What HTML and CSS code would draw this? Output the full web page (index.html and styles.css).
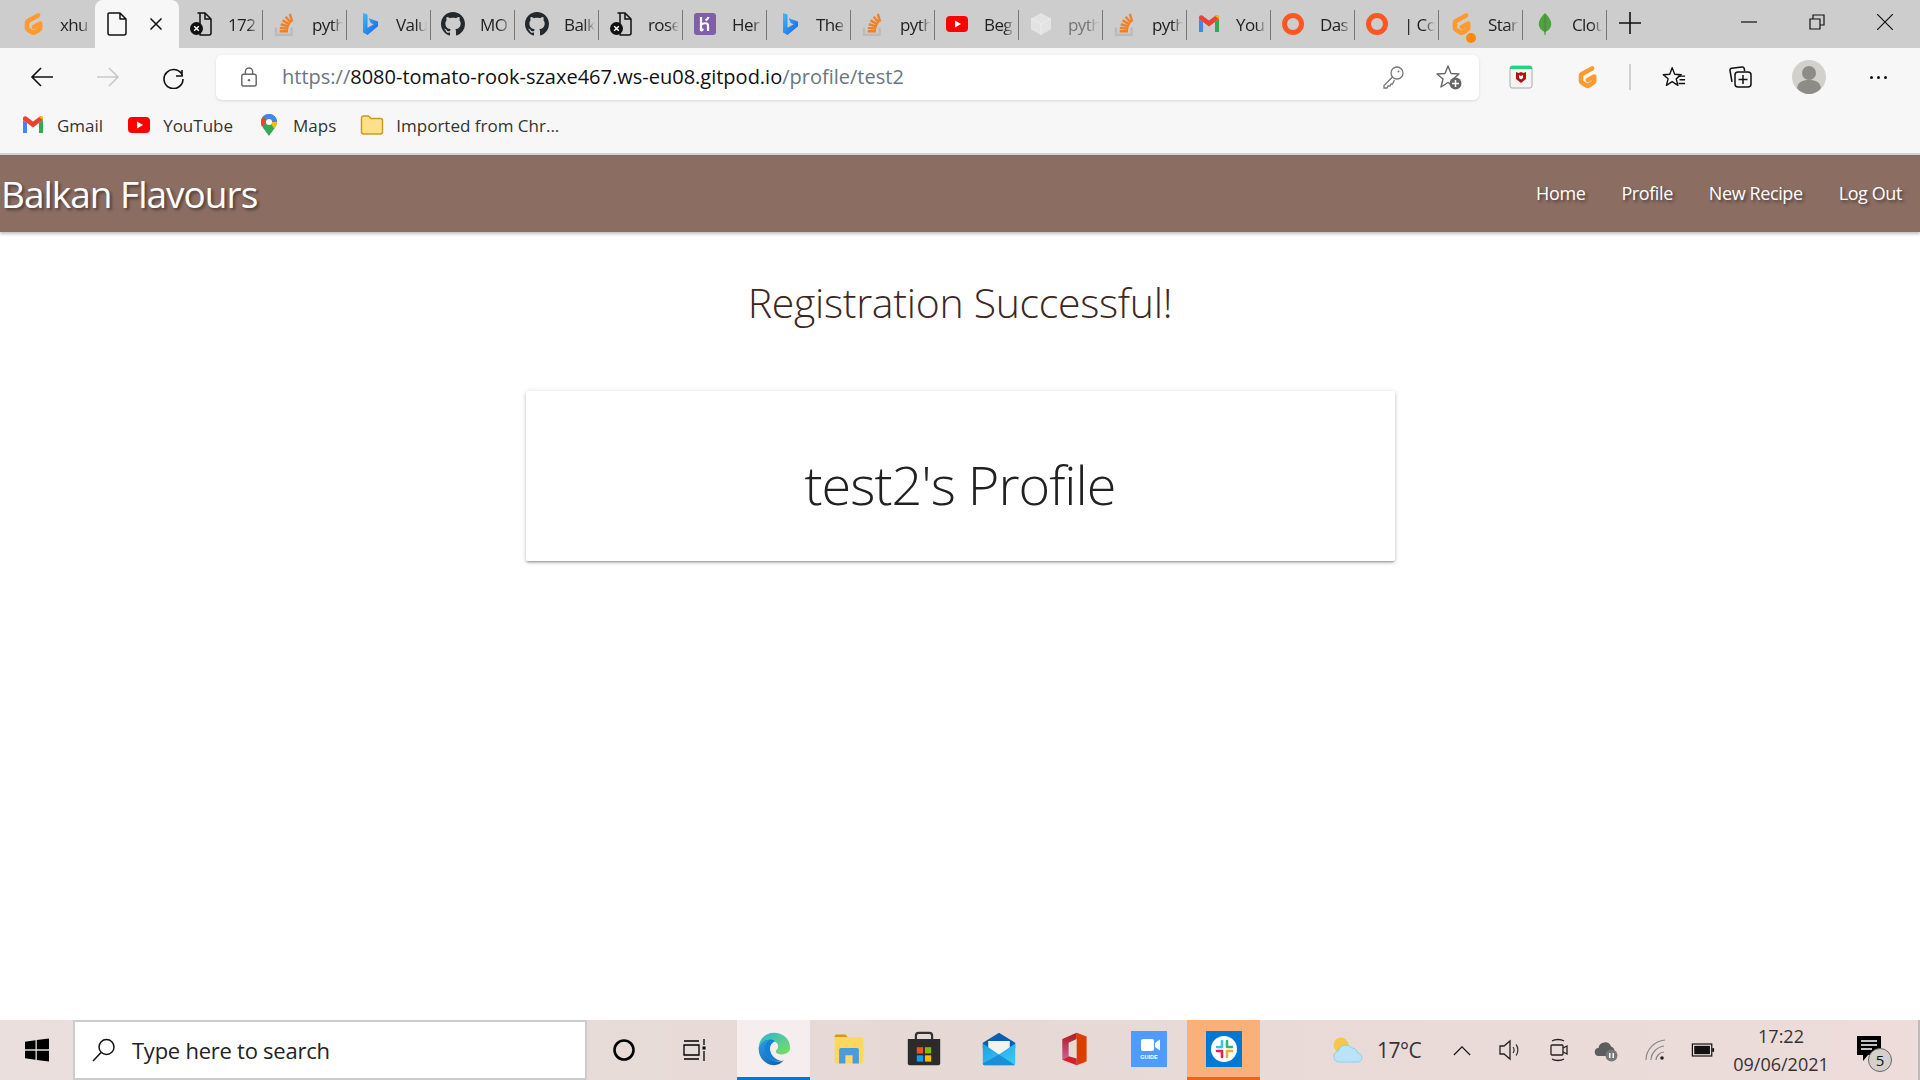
FILE: index.html
```html
<!DOCTYPE html>
<html>
<head>
<meta charset="UTF-8">
<title>Balkan Flavours</title>
<link rel="stylesheet" href="styles.css">
</head>
<body>
<svg class="defs" aria-hidden="true">
	<defs>
		<linearGradient id="bingGrad" x1="0" y1="0" x2="1" y2="1"><stop offset="0" stop-color="#37bdff"/><stop offset="1" stop-color="#1b5fe0"/></linearGradient>
		<linearGradient id="edgeGrad" x1="0" y1="0" x2="1" y2="1"><stop offset="0" stop-color="#2f9fe6"/><stop offset="1" stop-color="#0c59a4"/></linearGradient>
		<linearGradient id="edgeTop" x1="0" y1="0" x2="1" y2="1"><stop offset="0" stop-color="#2ab5d6"/><stop offset="1" stop-color="#7ee05a"/></linearGradient>
		<linearGradient id="officeGrad" x1="0" y1="0" x2="0" y2="1"><stop offset="0" stop-color="#b01818"/><stop offset="1" stop-color="#c9609c"/></linearGradient>
		<linearGradient id="mailGrad" x1="0" y1="0" x2="1" y2="1"><stop offset="0" stop-color="#1f9fe3"/><stop offset="1" stop-color="#3ccbf8"/></linearGradient>
		<symbol id="i-gitpod" viewBox="3.500 2.500 16 19"><path d="M15.500 5.200 7.500 9.600a1.500 1.500 0 0 0-.8 1.300v4.300c0 .6.3 1.100.8 1.300l3.700 2.200c.5.3 1 .3 1.500 0l3.700-2.200c.5-.2.8-.7.8-1.300v-3.600l-5 2.800" fill="none" stroke="#ff9a2e" stroke-width="3.600" stroke-linecap="round" stroke-linejoin="round"/></symbol>
		<symbol id="i-so" viewBox="3 2 19 20"><path d="M5 15v6h13v-6" fill="none" stroke="#bcbbbb" stroke-width="2"/><path d="M8 18h7M8.200 15.200l7 .8M9 12.200l6.800 2M10.500 9l6 3.500M13 6l4.500 5M16.500 3.500l2 6.500" stroke="#f48024" stroke-width="2" fill="none"/></symbol>
		<symbol id="i-bing" viewBox="0 0 24 24"><path d="M6 1l4.500 1.600v13.200l6.200-3.500-3-1.400-1.900-4.700 9.200 3.200v4.800L10.500 23 6 20.500z" fill="url(#bingGrad)"/></symbol>
		<symbol id="i-github" viewBox="0 0 16 16"><path fill="#24292e" d="M8 0C3.580 0 0 3.580 0 8c0 3.540 2.290 6.530 5.470 7.590.4.070.550-.170.550-.380 0-.190-.010-.820-.010-1.490-2.010.370-2.530-.490-2.690-.940-.090-.230-.480-.940-.820-1.130-.280-.150-.680-.520-.010-.530.630-.010 1.080.580 1.230.820.720 1.210 1.870.870 2.330.660.070-.520.280-.870.510-1.070-1.780-.2-3.640-.890-3.640-3.950 0-.870.310-1.590.820-2.150-.080-.2-.360-1.020.080-2.120 0 0 .670-.210 2.200.820.640-.180 1.320-.270 2-.270.680 0 1.360.090 2 .27 1.530-1.040 2.200-.820 2.200-.820.440 1.100.160 1.920.080 2.120.510.560.820 1.270.820 2.150 0 3.070-1.870 3.750-3.650 3.950.290.250.540.730.540 1.480 0 1.070-.010 1.930-.010 2.200 0 .210.150.460.550.380A8.013 8.013 0 0 0 16 8c0-4.420-3.580-8-8-8z"/></symbol>
		<symbol id="i-docerr" viewBox="0 0 24 24"><path d="M9 1h7l6 6v14a2 2 0 0 1-2 2h-9V1z" fill="none" stroke="#111" stroke-width="1.500" stroke-linejoin="round"/><path d="M16 1v6h6" fill="none" stroke="#111" stroke-width="1.500"/><circle cx="7.500" cy="16.500" r="6.500" fill="#111"/><path d="M5.200 14.200l4.600 4.600m0-4.600l-4.600 4.600" stroke="#fff" stroke-width="1.500"/></symbol>
		<symbol id="i-heroku" viewBox="0 0 24 24"><rect x="1" y="1" width="22" height="22" rx="3" fill="#7f5fa8"/><path d="M8 5v14M8 12.500c3-1.600 7-2 7 1V19M15.500 5c-.4 1.600-1.500 2.600-3 3.400M8 19l2.500-2" stroke="#fff" stroke-width="2.200" fill="none"/></symbol>
		<symbol id="i-yt" viewBox="0 0 24 24"><rect x="1" y="4" width="22" height="16" rx="4" fill="#f00"/><path d="M10 8.500v7l6-3.500z" fill="#fff"/></symbol>
		<symbol id="i-cube" viewBox="0 0 24 24"><path d="M12 1 22 6.500v11L12 23 2 17.500v-11z" fill="#e3e3e3"/><path d="M2 6.500l10 5.500L22 6.500M12 12v11" stroke="#eee" fill="none"/></symbol>
		<symbol id="i-gmail" viewBox="0 0 24 24"><path d="M2 7v13h4V10z" fill="#4285f4"/><path d="M18 10v10h4V7z" fill="#34a853"/><path d="M2 7l10 7.500L22 7V5.500C22 3.500 19.800 2.600 18.400 3.700L12 8.500 5.600 3.700C4.200 2.600 2 3.500 2 5.500z" fill="#ea4335"/><path d="M18 3.900 22 7V5.500C22 3.500 19.800 2.600 18.400 3.700z" fill="#fbbc04"/></symbol>
		<symbol id="i-ring" viewBox="0 0 24 24"><circle cx="12" cy="12" r="8.500" fill="none" stroke="#ff5722" stroke-width="5"/></symbol>
		<symbol id="i-leaf" viewBox="0 0 24 24"><path d="M12 1c5 5 7 9 6 13-.7 3-3.500 5-5.500 6L12 23.500l-.5-3.500C9.500 19 6.700 17 6 14 5 10 7 6 12 1z" fill="#4fa23f"/><path d="M12 3v20" stroke="#3c7f31" stroke-width=".7"/></symbol>
	</defs>
</svg>

<div class="tabs">
	<div class="tab"><svg class="fav"><use href="#i-gitpod"/></svg><span class="tab-text">xhu</span></div>
	<div class="tab tab-active">
		<svg class="fav" viewBox="0 0 24 24"><path d="M4 1h11l6 6v14a2 2 0 0 1-2 2H5a2 2 0 0 1-2-2V2a1 1 0 0 1 1-1zM15 1v6h6" fill="none" stroke="#111" stroke-width="1.500" stroke-linejoin="round"/></svg>
		<svg class="tab-close" viewBox="0 0 14 14"><path d="M1.500 1.500l11 11m0-11l-11 11" stroke="#111" stroke-width="1.500"/></svg>
	</div>
	<div class="tab"><svg class="fav"><use href="#i-docerr"/></svg><span class="tab-text">172</span></div>
	<div class="tab"><svg class="fav"><use href="#i-so"/></svg><span class="tab-text">pyth</span></div>
	<div class="tab"><svg class="fav"><use href="#i-bing"/></svg><span class="tab-text">Valu</span></div>
	<div class="tab"><svg class="fav"><use href="#i-github"/></svg><span class="tab-text">MO</span></div>
	<div class="tab"><svg class="fav"><use href="#i-github"/></svg><span class="tab-text">Balk</span></div>
	<div class="tab"><svg class="fav"><use href="#i-docerr"/></svg><span class="tab-text">rose</span></div>
	<div class="tab"><svg class="fav"><use href="#i-heroku"/></svg><span class="tab-text">Her</span></div>
	<div class="tab"><svg class="fav"><use href="#i-bing"/></svg><span class="tab-text">The</span></div>
	<div class="tab"><svg class="fav"><use href="#i-so"/></svg><span class="tab-text">pyth</span></div>
	<div class="tab"><svg class="fav"><use href="#i-yt"/></svg><span class="tab-text">Beg</span></div>
	<div class="tab"><svg class="fav"><use href="#i-cube"/></svg><span class="tab-text tab-dim">pyth</span></div>
	<div class="tab"><svg class="fav"><use href="#i-so"/></svg><span class="tab-text">pyth</span></div>
	<div class="tab"><svg class="fav"><use href="#i-gmail"/></svg><span class="tab-text">You</span></div>
	<div class="tab"><svg class="fav"><use href="#i-ring"/></svg><span class="tab-text">Das</span></div>
	<div class="tab"><svg class="fav"><use href="#i-ring"/></svg><span class="tab-text">| Co</span></div>
	<div class="tab tab-badge"><svg class="fav"><use href="#i-gitpod"/></svg><i class="badge-dot"></i><span class="tab-text">Star</span></div>
	<div class="tab"><svg class="fav"><use href="#i-leaf"/></svg><span class="tab-text">Clou</span></div>
	<svg class="new-tab" viewBox="0 0 22 22"><path d="M11 0v22M0 11h22" stroke="#111" stroke-width="1.600"/></svg>
	<div class="win-btns">
		<svg viewBox="0 0 16 16"><path d="M0 8h16" stroke="#111" stroke-width="1.200"/></svg>
		<svg viewBox="0 0 16 16"><path d="M1 5h10v10H1zM4 5V1h11v10h-4" fill="none" stroke="#111" stroke-width="1.200"/></svg>
		<svg viewBox="0 0 16 16"><path d="M0 0l16 16m0-16L0 16" stroke="#111" stroke-width="1.200"/></svg>
	</div>
</div>

<div class="toolbar">
	<div class="tool"><svg viewBox="0 0 24 24" class="ic"><path d="M23 12H2M11 3l-9 9 9 9" fill="none" stroke="#111" stroke-width="1.600"/></svg></div>
	<div class="tool"><svg viewBox="0 0 24 24" class="ic"><path d="M1 12h21M13 3l9 9-9 9" fill="none" stroke="#c9c9c9" stroke-width="1.600"/></svg></div>
	<div class="tool"><svg viewBox="0 0 24 24" class="ic"><path d="M20 5v6h-6M20.500 11A9.500 9.500 0 1 0 21 14" fill="none" stroke="#111" stroke-width="1.600"/></svg></div>
	<div class="address">
		<svg viewBox="0 0 20 24" class="lock"><rect x="2" y="9" width="16" height="13" rx="2" fill="none" stroke="#666" stroke-width="1.600"/><path d="M6 9V6a4 4 0 0 1 8 0v3" fill="none" stroke="#666" stroke-width="1.600"/><circle cx="10" cy="15.500" r="1.300" fill="#666"/></svg>
		<span class="url"><span class="url-dim">https://</span>8080-tomato-rook-szaxe467.ws-eu08.gitpod.io<span class="url-dim">/profile/test2</span></span>
		<svg viewBox="0 0 24 24" class="ic addr-key"><circle cx="16" cy="8" r="6" fill="none" stroke="#777" stroke-width="1.300"/><path d="M11.500 12 3 20.500V23h3l1-2h2l1-2h1.500l2-4" fill="none" stroke="#777" stroke-width="1.300"/><circle cx="17.500" cy="6.500" r="1" fill="#777"/></svg>
		<svg viewBox="0 0 26 26" class="ic addr-star"><path d="M12 2l3 7.500 8 .5-6 5 2 8-7-4.500L5 23l2-8-6-5 8-.5z" fill="none" stroke="#666" stroke-width="1.400" stroke-linejoin="round"/><circle cx="19.500" cy="19.500" r="6" fill="#666"/><path d="M19.500 16v7M16 19.500h7" stroke="#fff" stroke-width="1.500"/></svg>
	</div>
	<div class="tool"><svg viewBox="0 0 24 24" class="ic"><rect x="1" y="1" width="22" height="22" rx="2" fill="#f4f4f4" stroke="#aaa"/><path d="M1 3a2 2 0 0 1 2-2h18a2 2 0 0 1 2 2v1H1z" fill="#1fd67c"/><path d="M7 7l2.500 1L12 7l2.500 1L17 7v7l-5 4-5-4z" fill="#b01212"/><path d="M10 10v3l2 1.500 2-1.500v-3l-2 1z" fill="#f4f4f4"/></svg></div>
	<div class="tool"><svg class="ic"><use href="#i-gitpod"/></svg></div>
	<div class="tool-sep"></div>
	<div class="tool"><svg viewBox="0 0 26 24" class="ic"><path d="M11 2l2.800 7 7 .5-5.400 4.500 1.800 7-6.200-4-6.200 4 1.800-7L1.400 9.500l7-.5z" fill="none" stroke="#111" stroke-width="1.500" stroke-linejoin="round"/><path d="M17 11h8M19 15h6M18 19h7" stroke="#111" stroke-width="1.500"/></svg></div>
	<div class="tool"><svg viewBox="0 0 24 24" class="ic"><path d="M4 17 2 5.500A2 2 0 0 1 3.700 3.200L14 2a2 2 0 0 1 2.200 1.500l.5 2.500" fill="none" stroke="#111" stroke-width="1.500"/><rect x="7" y="7" width="16" height="15" rx="3" fill="none" stroke="#111" stroke-width="1.500"/><path d="M15 10v9M10.500 14.500h9" stroke="#111" stroke-width="1.500"/></svg></div>
	<div class="tool tool-avatar"><svg viewBox="0 0 34 34" class="avatar"><circle cx="17" cy="17" r="17" fill="#d3d1cc"/><circle cx="17" cy="13" r="7" fill="#8e8c87"/><path d="M5 28c1-7 7-8 12-8s11 1 12 8c-3 4-8 6-12 6s-9-2-12-6z" fill="#8e8c87"/></svg></div>
	<div class="tool tool-dots"><i></i><i></i><i></i></div>
</div>

<div class="bookmarks">
	<a class="bm"><svg class="fav"><use href="#i-gmail"/></svg>Gmail</a>
	<a class="bm"><svg class="fav"><use href="#i-yt"/></svg>YouTube</a>
	<a class="bm"><svg class="fav" viewBox="0 0 24 24"><path d="M12 23C8 17 4 13.500 4 9a8 8 0 0 1 16 0c0 4.500-4 8-8 14z" fill="#34a853"/><path d="M6 3.500A8 8 0 0 1 12 1v5a3 3 0 0 0-2.300 1z" fill="#4285f4"/><path d="M12 1a8 8 0 0 1 8 8h-5a3 3 0 0 0-3-3z" fill="#4285f4"/><path d="M4 9c0-2 .8-4 2-5.500L9.700 7A3 3 0 0 0 9 9l-4 5c-.6-1.500-1-3-1-5z" fill="#ea4335"/><path d="M20 9c0 2.500-1.200 4.500-2.800 6.700L14 11a3 3 0 0 0 1-2z" fill="#fbbc04"/><circle cx="12" cy="9" r="3" fill="#fff"/></svg>Maps</a>
	<a class="bm"><svg class="fav" viewBox="0 0 24 24"><path d="M1.500 5a2 2 0 0 1 2-2h5l2.500 2.500h9.500a2 2 0 0 1 2 2V19a2 2 0 0 1-2 2h-17a2 2 0 0 1-2-2z" fill="#ffe08a" stroke="#c79a24" stroke-width="1.500"/></svg>Imported from Chr...</a>
</div>

<nav class="nav">
	<a class="brand">Balkan Flavours</a>
	<ul class="nav-links">
		<li>Home</li>
		<li>Profile</li>
		<li>New Recipe</li>
		<li>Log Out</li>
	</ul>
</nav>

<main class="page">
	<h3 class="flash">Registration Successful!</h3>
	<div class="card">
		<h2 class="card-title">test2's Profile</h2>
	</div>
</main>

<footer class="taskbar">
	<div class="start"><svg viewBox="0 0 24 24"><path d="M0 3.800 10.500 2.300v9H0zM11.800 2.100 24 .4v10.900H11.800zM0 12.700h10.500v9L0 20.200zM11.800 12.700H24v10.900l-12.200-1.700z" fill="#000"/></svg></div>
	<div class="search">
		<svg viewBox="0 0 24 24"><circle cx="14.500" cy="9" r="7.500" fill="none" stroke="#111" stroke-width="1.500"/><path d="M9 14.500 1 23" stroke="#111" stroke-width="1.500"/></svg>
		<span>Type here to search</span>
	</div>
	<div class="task-tool cortana"><svg viewBox="0 0 24 24"><circle cx="12" cy="12" r="9.500" fill="none" stroke="#000" stroke-width="2.600"/></svg></div>
	<div class="task-tool taskview"><svg viewBox="0 0 24 24"><path d="M1 3h15M1 21h15M1 7h15v10H1zM21 1v6M21 13v10" fill="none" stroke="#000" stroke-width="1.300"/><rect x="19.500" y="8.500" width="3" height="3" fill="#000"/></svg></div>
	<div class="apps">
		<div class="app app-on">
			<svg viewBox="0 0 40 40"><path d="M3 18C4 8 11 2 20 2c10 0 18 7 18 17 0 4-4 7-9 7-3 0-7-1-7-3 0-2 2-2.500 2.500-5 .6-4-2.500-7-7.500-7C10 11 4 15 3 18z" fill="url(#edgeTop)"/><path d="M3 18c2-5 7-9 13-8.500-4 2-7 6.500-6 12.500 1 7 7 12 14 12 3 0 5-.5 7-1.500C28 36 24 38 20 38 10 38 2 29 3 18z" fill="url(#edgeGrad)"/><path d="M16 9.500c2 0 4 .5 5 2-4 2-6.500 6-5 11 1.500 6 7 10 12 10.500-1.500.5-3 1-4.500 1-7 0-13-5-14-12-1-6 2-10.500 6.500-12.500z" fill="#1480d8"/></svg>
		</div>
		<div class="app">
			<svg viewBox="0 0 40 40"><path d="M4 6a2 2 0 0 1 2-2h10l3 3h-15z" fill="#d79a0d"/><rect x="4" y="7" width="32" height="29" rx="2" fill="#ffd75e"/><path d="M9 36V21a2 2 0 0 1 2-2h18a2 2 0 0 1 2 2v15h-7v-9h-8v9z" fill="#4a9bdc"/></svg>
		</div>
		<div class="app">
			<svg viewBox="0 0 40 40"><path d="M11 11V5a3 3 0 0 1 3-3h12a3 3 0 0 1 3 3v6" fill="none" stroke="#333" stroke-width="2.500"/><path d="M2 9h36v27a2 2 0 0 1-2 2H4a2 2 0 0 1-2-2z" fill="#2b2b2b"/><rect x="12" y="18" width="7" height="7" fill="#f25022"/><rect x="21" y="18" width="7" height="7" fill="#7fba00"/><rect x="12" y="27" width="7" height="7" fill="#00a4ef"/><rect x="21" y="27" width="7" height="7" fill="#ffb900"/></svg>
		</div>
		<div class="app">
			<svg viewBox="0 0 40 40"><path d="M20 2 38 13v6H2v-6z" fill="#0a5fb0"/><path d="M8 11h24v9L20 27 8 20z" fill="#f2f2f2"/><path d="M2 14l18 12 18-12v22a2 2 0 0 1-2 2H4a2 2 0 0 1-2-2z" fill="url(#mailGrad)"/><path d="M2 36 20 26l18 12H4a2 2 0 0 1-2-2z" fill="#1a8fd6"/></svg>
		</div>
		<div class="app">
			<svg viewBox="0 0 40 40"><path d="M7 9 23 2v7l-9 4v15l-7 4z" fill="url(#officeGrad)"/><path d="M23 2l11 4v28l-11 4z" fill="#dc3e00"/><path d="M7 32l7-4 9 2.500V38z" fill="#d71f2a"/></svg>
		</div>
		<div class="app">
			<svg viewBox="0 0 36 36"><rect width="36" height="36" fill="#4f9bff"/><rect x="10" y="8" width="13" height="12" rx="2" fill="#fff"/><path d="M24 12l5-3.500v11l-5-3.500z" fill="#fff"/><text x="18" y="28" class="guide-label">GUIDE</text></svg>
		</div>
		<div class="app app-alert">
			<svg viewBox="0 0 36 36"><rect width="36" height="36" fill="#0078d4"/><circle cx="18" cy="18" r="13" fill="#fff"/><path d="M16 10v6M11 16h5" stroke="#36c5f0" stroke-width="2.600" stroke-linecap="round"/><path d="M21 10v6M21 16h5" stroke="#2eb67d" stroke-width="2.600" stroke-linecap="round"/><path d="M16 20v6M11 20h5" stroke="#e01e5a" stroke-width="2.600" stroke-linecap="round"/><path d="M21 20v6M21 20h5" stroke="#ecb22e" stroke-width="2.600" stroke-linecap="round"/></svg>
		</div>
	</div>
	<div class="tray">
		<svg class="t-weather" viewBox="0 0 32 26"><circle cx="10" cy="8" r="7.500" fill="#f7c64a"/><path d="M8 25a5.500 5.500 0 0 1-1-10.800A8 8 0 0 1 21 11a6 6 0 0 1 5.500 5 4.500 4.500 0 0 1 0 9z" fill="#b9e3f8" stroke="#8ecdf0"/></svg>
		<span class="t-temp">17°C</span>
		<svg class="t-chev" viewBox="0 0 20 12"><path d="M1 11l9-9 9 9" fill="none" stroke="#111" stroke-width="1.300"/></svg>
		<svg class="t-ic t-speaker" viewBox="0 0 24 24"><path d="M2 8h4l6-5v18l-6-5H2z" fill="none" stroke="#222" stroke-width="1.300"/><path d="M15 9c1.500 2 1.500 4 0 6M18 6.500c2.500 3 2.500 8 0 11" fill="none" stroke="#333" stroke-width="1.200"/></svg>
		<svg class="t-ic" viewBox="0 0 24 24"><rect x="4" y="7" width="12" height="10" rx="1" fill="none" stroke="#222" stroke-width="1.300"/><path d="M16 10l4-2v8l-4-2M5 3c3-2 9-2 12 0M5 21c3 2 9 2 12 0" fill="none" stroke="#222" stroke-width="1.300"/></svg>
		<svg class="t-ic t-cloud" viewBox="0 0 24 24"><path d="M5 18a4 4 0 0 1-.500-8A6.500 6.500 0 0 1 17 8.500 5 5 0 0 1 17 18z" fill="#5d5d5d"/><circle cx="17.500" cy="17.500" r="6" fill="#777"/><path d="M15.800 15v5M19.200 15v5" stroke="#fff" stroke-width="1.400"/></svg>
		<svg class="t-ic t-wifi" viewBox="0 0 24 24"><path d="M2 22C2 12 10 3 21 2M7 22c0-7 6-13 13-14M12 22c0-4 4-8 8-8" fill="none" stroke="#888" stroke-width="1.200"/><circle cx="18" cy="20" r="1.800" fill="#222"/></svg>
		<svg class="t-ic t-battery" viewBox="0 0 26 24"><rect x="1.500" y="5.500" width="21" height="13" fill="none" stroke="#111" stroke-width="1.300"/><rect x="3.500" y="7.500" width="17" height="9" fill="#111"/><rect x="23" y="10" width="2" height="4" fill="#111"/></svg>
		<div class="clock"><span>17:22</span><span>09/06/2021</span></div>
		<div class="notif">
			<svg viewBox="0 0 24 26"><path d="M0 0h24v19H11l-5 6v-6H0z" fill="#000"/><path d="M4 5h16M4 9h16M4 13h11" stroke="#fff" stroke-width="1.300"/></svg>
			<span class="notif-count">5</span>
		</div>
	</div>
</footer>
</body>
</html>
```
FILE: styles.css
```css
*{ margin:0; padding:0; box-sizing:border-box; list-style:none;}
html,body{ height:100%;}
body{ width:1920px; height:1080px; overflow:hidden; display:flex; flex-direction:column; background:#fff; font-family:"Open Sans","Noto Sans",sans-serif; color:#222;}
.defs{ position:absolute; width:0; height:0;}

/* tab strip */
.tabs{ height:48px; background:#cdcdcd; display:flex; padding-left:11px; flex:none;}
.tab{ width:84px; height:48px; position:relative; display:flex; align-items:center; padding-left:10px;}
.tab::after{ content:""; position:absolute; right:0; top:10px; width:1px; height:30px; background:#777;}
.tab:first-child::after{ display:none;}
.fav{ width:24px; height:24px; flex:none;}
.tab-text{ margin-left:15px; width:31px; overflow:hidden; white-space:nowrap; font-size:17px; letter-spacing:-.6px; color:#222; -webkit-mask-image:linear-gradient(to right,#000 65%,transparent);}
.tab-dim{ color:#777;}
.tab-active{ background:#f7f7f7; border-radius:8px 8px 0 0;}
.tab-active::after{ display:none;}
.tab-close{ width:14px; height:14px; margin-left:20px;}
.badge-dot{ position:absolute; left:27px; top:33px; width:10px; height:10px; border-radius:50%; background:#ff8a00;}
.new-tab{ width:22px; height:22px; margin:12px 0 0 12px;}
.win-btns{ margin-left:auto; display:flex; padding-top:14px;}
.win-btns svg{ width:16px; height:16px; margin-left:52px;}
.win-btns svg:last-child{ margin-right:27px;}

/* toolbar */
.toolbar{ height:58px; background:#f7f7f7; display:flex; align-items:center; padding:0 9px; flex:none;}
.tool{ width:66px; height:44px; display:flex; align-items:center; justify-content:center; flex:none;}
.ic{ width:24px; height:24px;}
.tool-sep{ width:21px; height:26px; flex:none; position:relative;}
.tool-sep::after{ content:""; position:absolute; left:9px; top:0; width:2px; height:100%; background:#d0d0d0;}
.tool-avatar{ margin-left:3px;}
.avatar{ width:34px; height:34px;}
.tool-dots{ gap:4px; margin-left:3px;}
.tool-dots i{ width:3px; height:3px; border-radius:50%; background:#111;}
.address{ width:1263px; height:45px; margin:0 9px; background:#fff; border-radius:6px; box-shadow:0 1px 3px rgba(0,0,0,.12); display:flex; align-items:center; padding-left:24px; flex:none;}
.lock{ width:18px; height:22px; flex:none;}
.url{ margin-left:24px; font-size:20px; color:#111; white-space:nowrap; position:relative; top:-1px;}
.url-dim{ color:#6b7680;}
.addr-key{ margin-left:auto;}
.addr-star{ margin:0 17px 0 31px; width:26px; height:26px;}

/* bookmarks */
.bookmarks{ height:49px; background:#f7f7f7; border-bottom:2px solid #d4d4d4; display:flex; align-items:flex-start; padding:7px 0 0 21px; flex:none; font-size:17px; color:#333;}
.bm{ display:flex; align-items:center; gap:12px; margin-right:24px; white-space:nowrap;}

/* site nav */
.nav{ height:77px; background:#8b6d62; display:flex; align-items:center; justify-content:space-between; box-shadow:0 2px 3px rgba(0,0,0,.25); color:#fff; text-shadow:2px 2px 3px rgba(0,0,0,.45); flex:none; position:relative;}
.brand{ font-size:37px; letter-spacing:-1px; padding-left:1px;}
.nav-links{ display:flex;}
.nav-links li{ font-size:18px; letter-spacing:-.4px; padding:0 18px; position:relative; top:-1px;}

/* content */
.page{ flex:1; display:flex; flex-direction:column; align-items:center; min-height:0;}
.flash{ font-size:41px; font-weight:300; color:#3e2723; letter-spacing:-.3px; margin-top:44px; line-height:52px;}
.card{ width:869px; height:170px; margin-top:63px; background:#fff; border-radius:2px; box-shadow:0 2px 2px rgba(0,0,0,.14),0 3px 1px -2px rgba(0,0,0,.12),0 1px 5px rgba(0,0,0,.2); text-align:center;}
.card-title{ font-size:54px; font-weight:300; color:#212121; letter-spacing:-1px; line-height:70px; margin-top:58px;}

/* windows taskbar */
.taskbar{ height:60px; flex:none; background:linear-gradient(to right,#eadfdc,#e6d9d5 50%,#eddcda); display:flex; align-items:stretch; position:relative;}
.start{ width:73px; display:flex; align-items:center; justify-content:center;}
.start svg{ width:24px; height:24px;}
.search{ width:514px; background:#fff; border:2px solid #ccc; display:flex; align-items:center; padding-left:17px; font-size:22px; letter-spacing:-.25px; color:#222; gap:16px;}
.search svg{ width:24px; height:24px; flex:none;}
.task-tool{ display:flex; align-items:center; justify-content:center;}
.task-tool svg{ width:24px; height:24px;}
.cortana{ width:73px;}
.taskview{ width:70px;}
.apps{ display:flex; padding-left:7px; gap:2px;}
.app{ width:73px; display:flex; align-items:center; justify-content:center; border-bottom:3px solid transparent;}
.app svg{ width:36px; height:36px;}
.app-on{ background:#f6eeee; border-bottom-color:#0078d4;}
.app-alert{ background:#fbb07a; border-bottom-color:#f7630c;}
.guide-label{ font-size:5.500px; fill:#fff; text-anchor:middle; font-family:"Liberation Sans",sans-serif; font-weight:bold;}
.tray{ flex:1; display:flex; align-items:center; position:relative; border-right:2px solid #bbb;}
.t-weather{ width:32px; height:28px; margin-left:71px;}
.t-temp{ font-size:21px; letter-spacing:-.5px; margin-left:14px; color:#333; width:46px;}
.t-chev{ width:18px; height:11px; margin-left:30px;}
.t-ic{ width:24px; height:24px; margin-left:25px;}
.t-speaker{ margin-left:27px;}
.t-cloud{ margin-left:23px;}
.t-wifi{ margin-left:26px;}
.t-battery{ margin-left:23px;}
.clock{ width:110px; margin-left:11px; display:flex; flex-direction:column; align-items:center; font-size:18px; line-height:28px; color:#333;}
.notif{ position:relative; width:26px; height:28px; margin-left:20px;}
.notif svg{ width:26px; height:26px;}
.notif-count{ position:absolute; left:12px; top:12px; width:24px; height:24px; border-radius:50%; background:#d6d0cc; border:1px solid #666; font-size:15px; line-height:22px; text-align:center; color:#111;}
```
